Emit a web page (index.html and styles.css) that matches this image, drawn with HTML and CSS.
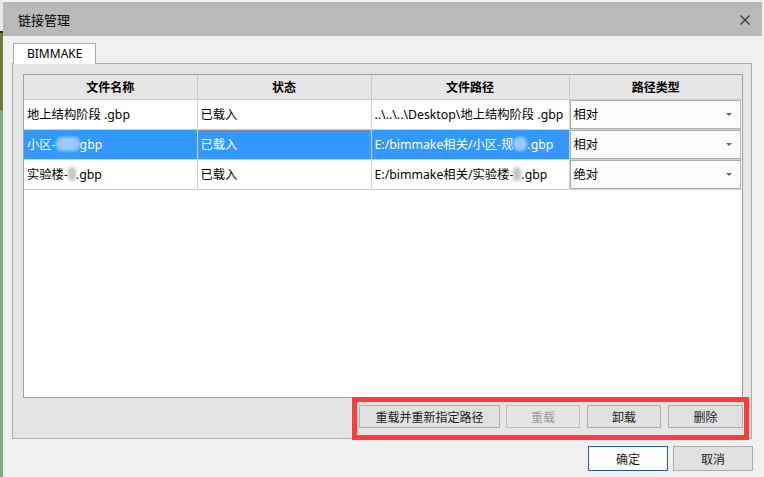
FILE: index.html
```html
<html>
  <head>
    <title>链接管理</title>
    <link rel="stylesheet" href="styles.css">
  </head>
  <body>
	<div class="dialog">
		<div class="titlebar">
			<span class="title">链接管理</span>
			<svg class="close" width="10" height="10" viewBox="0 0 10 10">
				<path d="M0.5 0.5 L9.5 9.5 M9.5 0.5 L0.5 9.5" stroke="#333" stroke-width="1.1" fill="none"/>
			</svg>
		</div>
		<div class="content">
			<div class="tabs">
				<div class="tab">BIMMAKE</div>
			</div>
			<div class="pane">
				<div class="list">
					<table>
						<colgroup>
							<col style="width: 173px">
							<col style="width: 174px">
							<col style="width: 198px">
							<col>
						</colgroup>
						<tr class="head">
							<th>文件名称</th>
							<th>状态</th>
							<th>文件路径</th>
							<th>路径类型</th>
						</tr>
						<tr>
							<td>地上结构阶段 .gbp</td>
							<td>已载入</td>
							<td>..\..\..\Desktop\地上结构阶段 .gbp</td>
							<td class="type"><div class="combo"><span>相对</span><i class="arrow"></i></div></td>
						</tr>
						<tr class="selected">
							<td>小区-<span class="blob blue wide"></span>gbp</td>
							<td class="focus">已载入</td>
							<td>E:/bimmake相关/小区-规<span class="blob blue"></span>.gbp</td>
							<td class="type"><div class="combo"><span>相对</span><i class="arrow"></i></div></td>
						</tr>
						<tr>
							<td>实验楼-<span class="blob gray"></span>.gbp</td>
							<td>已载入</td>
							<td>E:/bimmake相关/实验楼-<span class="blob gray"></span>.gbp</td>
							<td class="type"><div class="combo"><span>绝对</span><i class="arrow"></i></div></td>
						</tr>
					</table>
				</div>
				<div class="actions">
					<button class="btn relocate">重载并重新指定路径</button>
					<button class="btn small" disabled>重载</button>
					<button class="btn small">卸载</button>
					<button class="btn small last">删除</button>
				</div>
				<div class="mark"></div>
			</div>
			<div class="footer">
				<button class="btn ok">确定</button>
				<button class="btn cancel">取消</button>
			</div>
		</div>
	</div>
  </body>
</html>
```

FILE: styles.css
```css
body {
	margin: 0;
	background-color: #f2f2f2;
	background-image: linear-gradient(#e9e9e9 0, #e9e9e9 31px, #222 31px, #222 33px, #6c7c38 33px, #6c7c38 110px, #7fa685 110px);
	background-size: 3px 100%;
	background-repeat: no-repeat;
	font-family: "Noto Sans", "Noto Sans CJK SC", sans-serif;
	font-size: 12px;
	color: #000;
}

.dialog {
	margin: 2px 0 0 3px;
	width: 759px;
	height: 475px;
	background-color: #f0f0f0;
}

.titlebar {
	height: 34px;
	background-color: #b9b9b9;
	display: flex;
	align-items: center;
	justify-content: space-between;
	padding: 0 12px 0 15px;
}

.title {
	font-family: "Noto Sans CJK SC", sans-serif;
	font-size: 13px;
}

.close {
	margin-top: 1px;
}

.content {
	padding: 7px 10px 0 9px;
}

.tabs {
	display: flex;
	padding-left: 1px;
}

.tab {
	height: 20px;
	line-height: 19px;
	padding: 0 13px;
	background-color: #fff;
	border: 1px solid #adadad;
	border-bottom: none;
	margin-bottom: -1px;
	position: relative;
	z-index: 1;
}

.pane {
	position: relative;
	background-color: #e5e5e5;
	border: 1px solid #adadad;
	padding: 10px 8px 10px 10px;
}

.list {
	height: 324px;
	box-sizing: border-box;
	background-color: #fff;
	border: 1px solid #a0a0a0;
}

table {
	width: 718px;
	table-layout: fixed;
	border-collapse: collapse;
	font-size: 12px;
}

th {
	height: 24px;
	padding: 0;
	background-color: #e6e6e6;
	border-right: 1px solid #cbcbcb;
	border-bottom: 1px solid #cbcbcb;
	font-family: "Noto Sans CJK SC", sans-serif;
	font-weight: bold;
	font-size: 12px;
	text-align: center;
}

td {
	height: 29px;
	padding: 0 3px;
	border-right: 1px solid #d2d2d2;
	border-bottom: 1px solid #d2d2d2;
	font-size: 12.3px;
	white-space: nowrap;
	overflow: hidden;
}

th:last-child,
td:last-child {
	border-right: none;
}

.selected td {
	background-color: #3399ff;
	color: #fff;
}

.selected td.focus {
	outline: 1px dotted #d9782e;
	outline-offset: -2px;
}

td.type,
.selected td.type {
	padding: 0;
	background-color: #fff;
	color: #000;
}

.combo {
	height: 27px;
	margin: 0 1px 0 0;
	border: 1px solid #adadad;
	background-color: #fcfcfc;
	display: flex;
	align-items: center;
	justify-content: space-between;
	padding: 0 8px 0 3px;
}

.arrow {
	width: 0;
	height: 0;
	border-left: 3px solid transparent;
	border-right: 3px solid transparent;
	border-top: 3px solid #666;
}

.blob {
	display: inline-block;
	height: 14px;
	vertical-align: -2px;
	border-radius: 6px;
	filter: blur(1.5px);
}

.blob.blue {
	width: 14px;
	background-color: #9ccaff;
}

.blob.wide {
	width: 24px;
}

.blob.gray {
	width: 8px;
	background-color: #c6c6c6;
}

.actions {
	display: flex;
	justify-content: flex-end;
	gap: 7px;
	margin-top: 7px;
}

.btn {
	height: 23px;
	padding: 0;
	background-color: #e1e1e1;
	border: 1px solid #adadad;
	font-family: "Noto Sans CJK SC", sans-serif;
	font-size: 12px;
	color: #1a1a1a;
}

.relocate {
	width: 141px;
	margin-right: -1px;
}

.small {
	width: 74px;
}

.last {
	width: 75px;
}

.btn:disabled {
	background-color: #e5e5e5;
	border-color: #bfbfbf;
	color: #9a9a9a;
}

/* red annotation box around the action buttons */
.mark {
	position: absolute;
	left: 339px;
	top: 333px;
	width: 387px;
	height: 33px;
	border: 5px solid #ff3b3b;
}

.footer {
	display: flex;
	justify-content: flex-end;
	gap: 5px;
	padding-top: 7px;
	margin-right: -1px;
}

.ok,
.cancel {
	width: 80px;
	height: 25px;
}

.ok {
	background-color: #fdfdfd;
	border-color: #2b5a9a;
}
```
